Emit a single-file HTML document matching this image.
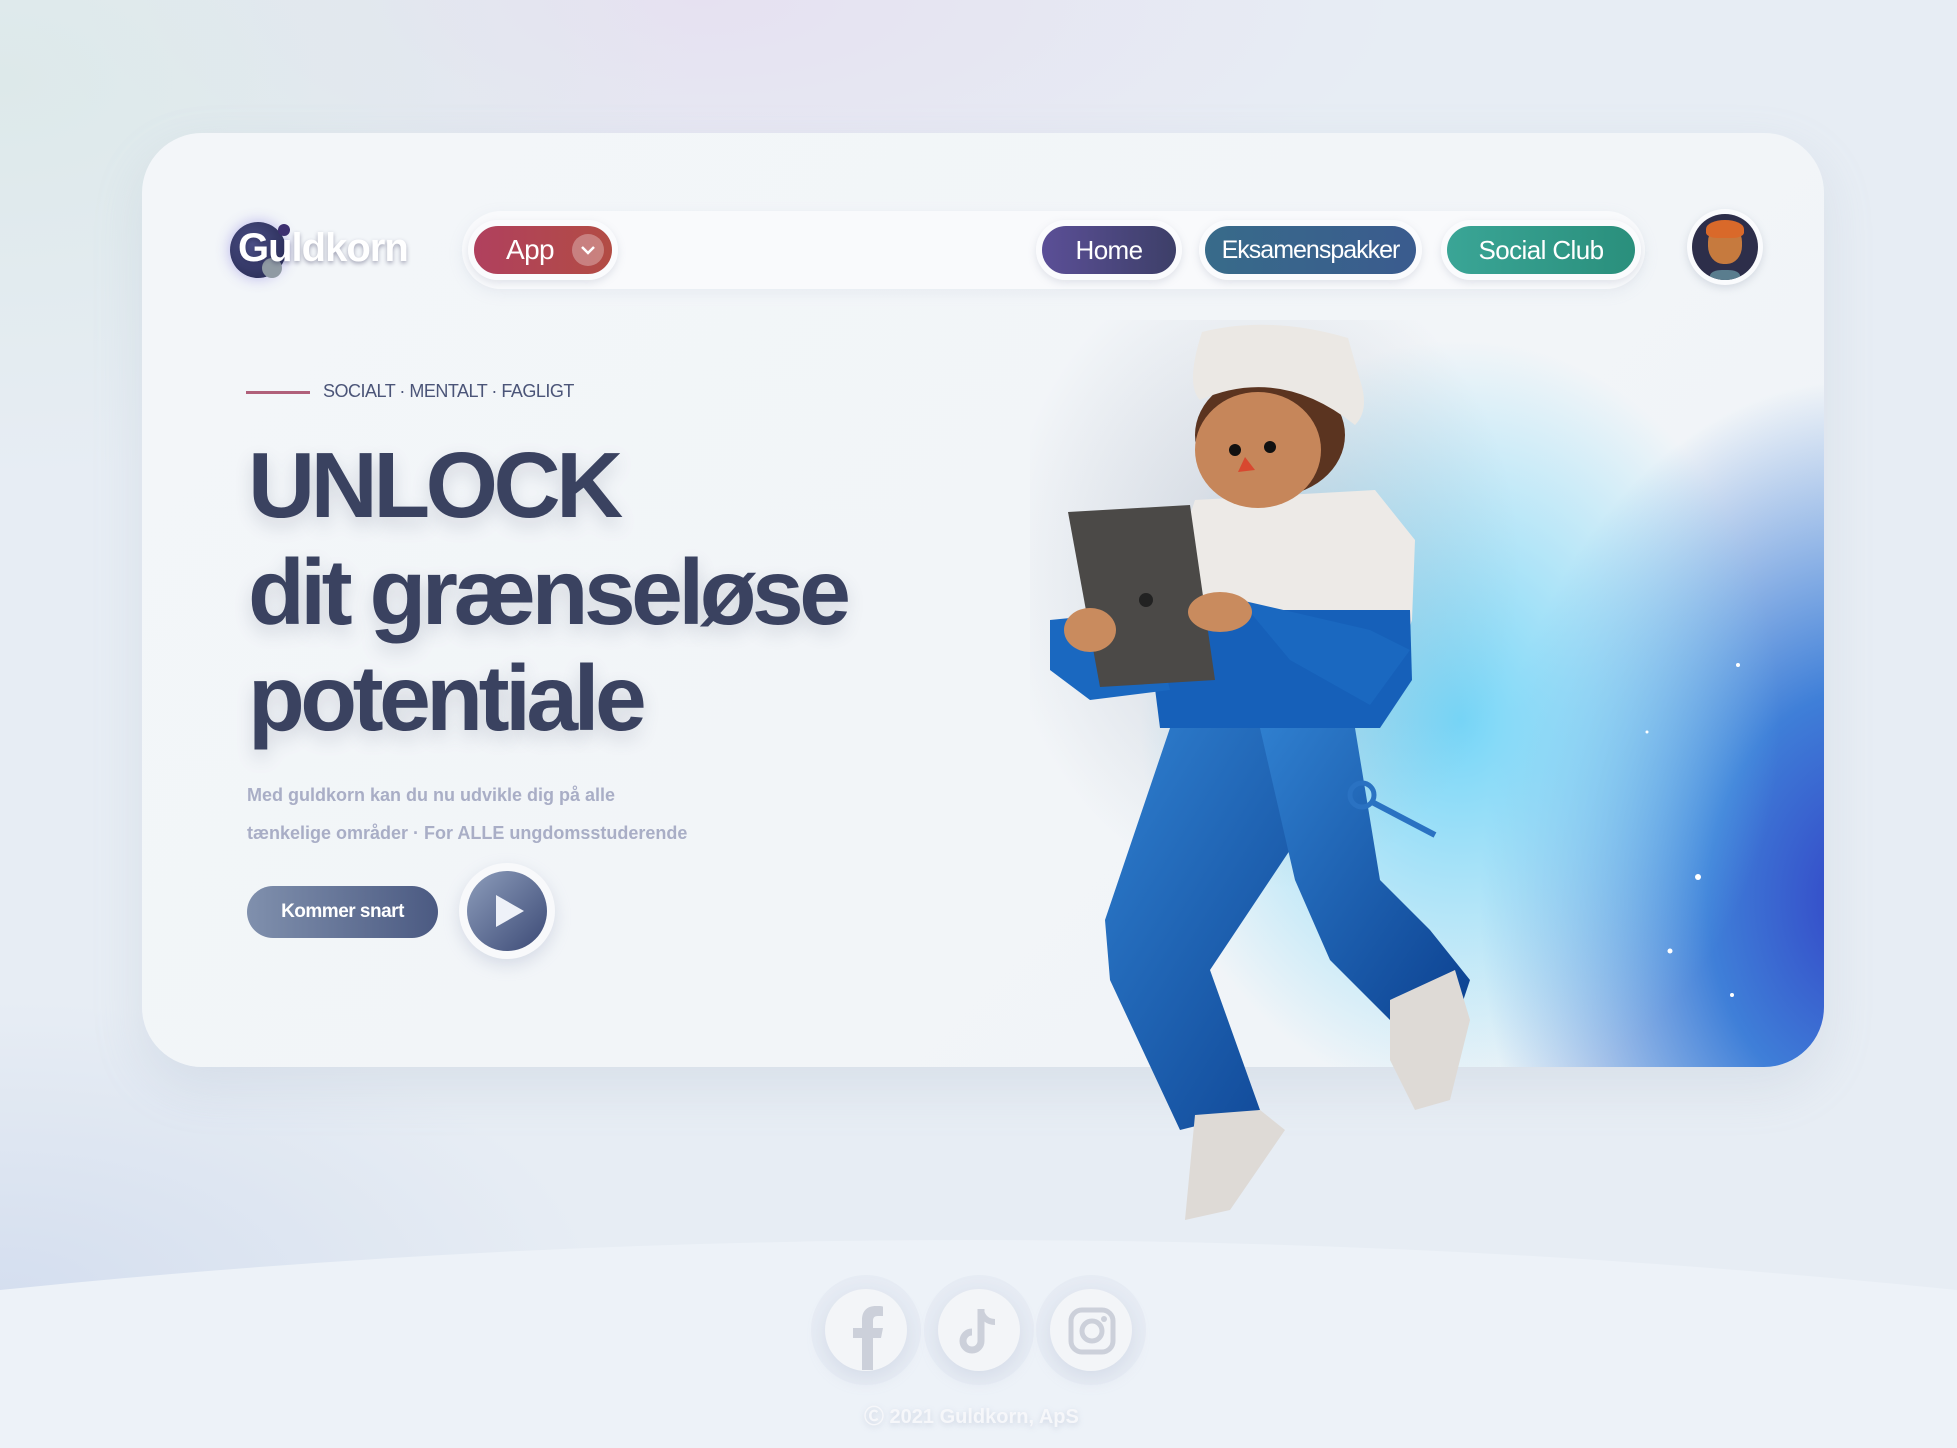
<!DOCTYPE html>
<html><head><meta charset="utf-8">
<style>
*{margin:0;padding:0;box-sizing:border-box}
html,body{width:1957px;height:1448px;overflow:hidden}
body{position:relative;font-family:"Liberation Sans",sans-serif;
background:radial-gradient(ellipse 700px 400px at 0px 80px,#dde9ea 0%,rgba(221,233,234,0) 100%),
radial-gradient(ellipse 700px 260px at 700px 0px,#e6e1f1 0%,rgba(230,225,241,0) 100%),
radial-gradient(ellipse 600px 300px at 0px 1300px,#d4deef 0%,rgba(212,222,239,0) 100%),
#e7edf4}
.wrap{position:absolute;left:0;top:0;width:1957px;height:1448px;overflow:hidden}
.abs{position:absolute}
.card{left:142px;top:133px;width:1682px;height:934px;border-radius:60px;
background:linear-gradient(135deg,#f3f6f9 0%,#f2f5f8 60%,#eef3f7 100%);
box-shadow:0 20px 50px rgba(150,165,190,.18);overflow:hidden}
.glow{width:1100px;height:900px;
background:radial-gradient(ellipse 320px 380px at 560px 470px,#76d6f8 0%,rgba(118,214,248,.55) 45%,rgba(118,214,248,0) 100%),
radial-gradient(ellipse 380px 520px at 960px 650px,#3344c6 0%,#3f7fd8 40%,rgba(80,160,230,0) 100%)}
.nav{left:462px;top:211px;width:1183px;height:78px;border-radius:40px;background:rgba(250,251,253,.8);box-shadow:0 4px 14px rgba(170,180,200,.15)}
.pill{position:absolute;top:220px;height:60px;border-radius:30px;border:6px solid #fafbfd;color:#fff;font-size:26px;letter-spacing:-.6px;display:flex;align-items:center;justify-content:center;box-shadow:0 3px 8px rgba(150,160,180,.25);white-space:nowrap}
.h1{left:248px;color:#3a4260;font-weight:bold;font-size:93px;letter-spacing:-4.5px;text-shadow:0 8px 18px rgba(60,70,100,.18);white-space:nowrap}
.p{left:247px;color:#a9aec6;font-weight:bold;font-size:18px;white-space:nowrap}
.soc{width:82px;height:82px;border-radius:50%;background:#f3f5f8;box-shadow:0 0 0 14px rgba(215,222,235,.3),0 6px 18px rgba(160,170,195,.3);top:1289px}
</style></head><body><div class="wrap">
<svg class="abs" style="left:0;top:1230px" width="1957" height="218"><path d="M0 60 Q978 -40 1957 60 L1957 218 L0 218Z" fill="#edf2f8"/></svg>

<div class="abs card"><div class="abs glow" style="left:758px;top:117px"></div>
<svg class="abs" style="left:1158px;top:117px" width="524" height="817">
<g fill="#fff">
<circle cx="438" cy="415" r="2"/><circle cx="347" cy="482" r="1.5"/><circle cx="398" cy="627" r="3"/><circle cx="370" cy="701" r="2.5"/><circle cx="432" cy="745" r="2"/><circle cx="400" cy="845" r="3"/><circle cx="390" cy="858" r="2"/><circle cx="260" cy="863" r="3"/><circle cx="218" cy="925" r="2"/><circle cx="434" cy="885" r="1.5"/>
</g></svg>
</div>

<div class="abs nav"></div>
<div class="abs" style="left:230px;top:222px;width:56px;height:56px;border-radius:50%;background:radial-gradient(circle at 40% 40%,#4b4f86,#23264d);box-shadow:0 0 14px rgba(110,100,220,.45)"></div>
<div class="abs" style="left:278px;top:224px;width:12px;height:12px;border-radius:50%;background:#3c2f70"></div>
<div class="abs" style="left:262px;top:258px;width:20px;height:20px;border-radius:50%;background:#8f9aa3"></div>
<div class="abs" style="left:238px;top:226px;font-size:40px;font-weight:bold;color:#fff;letter-spacing:-1px;text-shadow:0 2px 4px rgba(40,40,80,.4)">Guldkorn</div>

<div class="pill" style="left:468px;width:150px;background:linear-gradient(90deg,#b0405e,#b24c44);justify-content:flex-start;padding-left:32px;font-size:28px">App
<span style="position:absolute;right:8px;top:8px;width:32px;height:32px;border-radius:50%;background:rgba(255,255,255,.3);display:flex;align-items:center;justify-content:center"><svg width="16" height="10"><path d="M2 2l6 6 6-6" stroke="#fff" stroke-width="2.5" fill="none"/></svg></span></div>
<div class="pill" style="left:1036px;width:146px;background:linear-gradient(90deg,#5b4f97,#3d3f68)">Home</div>
<div class="pill" style="left:1199px;width:223px;background:linear-gradient(90deg,#386b8a,#3a5b8e);font-size:25px;letter-spacing:-1px">Eksamenspakker</div>
<div class="pill" style="left:1441px;width:200px;background:linear-gradient(90deg,#3aa596,#2a8f7c)">Social Club</div>
<div class="abs" style="left:1687px;top:209px;width:76px;height:76px;border-radius:50%;background:#fafbfd;box-shadow:0 3px 8px rgba(150,160,180,.3)"></div>
<div class="abs" style="left:1692px;top:214px;width:66px;height:66px;border-radius:50%;background:#2d2e4a;overflow:hidden">
<div class="abs" style="left:16px;top:10px;width:34px;height:40px;border-radius:45%;background:#c67a3e"></div>
<div class="abs" style="left:14px;top:6px;width:38px;height:18px;border-radius:50% 50% 30% 30%;background:#d9692a"></div>
<div class="abs" style="left:18px;top:56px;width:30px;height:14px;border-radius:40%;background:#5a7d8e"></div></div>

<div class="abs" style="left:246px;top:391px;width:64px;height:3px;background:#b0607a"></div>
<div class="abs" style="left:323px;top:381px;font-size:18px;color:#4b5578;letter-spacing:-.5px">SOCIALT · MENTALT · FAGLIGT</div>
<div class="abs h1" style="top:432px">UNLOCK</div>
<div class="abs h1" style="top:539px">dit grænseløse</div>
<div class="abs h1" style="top:645px">potentiale</div>
<div class="abs p" style="top:785px">Med guldkorn kan du nu udvikle dig på alle</div>
<div class="abs p" style="top:823px">tænkelige områder · For ALLE ungdomsstuderende</div>
<div class="abs" style="left:247px;top:886px;width:191px;height:52px;border-radius:26px;background:linear-gradient(90deg,#8090ad,#4b5a82);color:#fff;font-weight:bold;font-size:19px;display:flex;align-items:center;justify-content:center;letter-spacing:-.5px">Kommer snart</div>
<div class="abs" style="left:459px;top:863px;width:96px;height:96px;border-radius:50%;background:#f8f9fb;box-shadow:0 6px 16px rgba(150,160,190,.3)"></div>
<div class="abs" style="left:467px;top:871px;width:80px;height:80px;border-radius:50%;background:linear-gradient(135deg,#8d9dbb,#3c4a76)"></div>
<svg class="abs" style="left:494px;top:893px" width="32" height="36"><path d="M2 2L30 18 2 34z" fill="#eef1f8"/></svg>

<svg class="abs" style="left:1030px;top:320px" width="560" height="920">
<defs>
<linearGradient id="bl" x1="0" y1="0" x2="1" y2="1"><stop offset="0" stop-color="#2f7fcf"/><stop offset="1" stop-color="#0b3f8e"/></linearGradient>
<radialGradient id="sh" cx=".5" cy=".5" r=".5"><stop offset="0" stop-color="rgba(120,135,160,.3)"/><stop offset="1" stop-color="rgba(120,135,160,0)"/></radialGradient>
</defs>
<ellipse cx="230" cy="250" rx="260" ry="320" fill="url(#sh)"/>
<path d="M140 408 L325 408 L280 500 L180 650 L230 790 L150 810 L80 660 L75 600 Z" fill="url(#bl)"/>
<path d="M230 408 L325 408 L350 560 L400 610 L440 660 L420 720 L360 700 L300 640 L265 560 Z" fill="url(#bl)"/>
<path d="M165 795 L230 790 L255 810 L200 890 L155 900 Z" fill="#dedad6"/>
<path d="M360 680 L425 650 L440 700 L420 780 L385 790 L360 740 Z" fill="#dedad6"/>
<path d="M165 180 L345 170 L385 220 L382 300 L350 400 L140 405 L125 300 Z" fill="#edeae7"/>
<path d="M115 290 L380 290 L382 360 L350 408 L130 408 Z" fill="#1660b9"/>
<path d="M20 300 L120 290 L140 370 L60 380 L20 350 Z" fill="#1a68c0"/>
<path d="M210 280 L340 310 L380 330 L340 385 L260 340 Z" fill="#1a68c0"/>
<path d="M38 192 L160 185 L185 360 L70 367 Z" fill="#4b4947"/>
<circle cx="116" cy="280" r="7" fill="#222"/>
<ellipse cx="60" cy="310" rx="26" ry="22" fill="#c98b5e"/>
<ellipse cx="190" cy="292" rx="32" ry="20" fill="#c98b5e"/>
<ellipse cx="240" cy="115" rx="75" ry="62" fill="#5b3420"/>
<ellipse cx="228" cy="130" rx="63" ry="58" fill="#c6865a"/>
<circle cx="205" cy="130" r="6" fill="#111"/><circle cx="240" cy="127" r="6" fill="#111"/>
<path d="M215 137 L225 150 L208 152Z" fill="#d8482f"/>
<path d="M172 12 Q240 -5 318 18 L330 60 Q340 90 325 105 Q250 45 170 80 Q155 65 172 12Z" fill="#ebe8e4"/>
<circle cx="332" cy="475" r="12" fill="none" stroke="#2a72c2" stroke-width="5"/>
<path d="M342 482 L405 515" stroke="#2a72c2" stroke-width="6"/>
</svg>

<div class="abs soc" style="left:825px"></div>
<div class="abs soc" style="left:938px"></div>
<div class="abs soc" style="left:1050px"></div>
<svg class="abs" style="left:845px;top:1300px" width="50" height="70"><path d="M17 70V38H8V28h9v-8c0-9 5-14 14-14 4 0 7 0 7 1v9h-5c-4 0-5 2-5 5v7h10l-2 10h-8v32z" fill="#ccd0da"/></svg>
<svg class="abs" style="left:957px;top:1307px" width="46" height="50"><path d="M24 2v32a9 9 0 1 1-9-9" stroke="#ccd0da" stroke-width="7" fill="none"/><path d="M24 4c2 7 7 11 14 11" stroke="#ccd0da" stroke-width="6" fill="none"/></svg>
<svg class="abs" style="left:1068px;top:1307px" width="48" height="48"><rect x="3" y="3" width="42" height="42" rx="11" stroke="#ccd0da" stroke-width="5" fill="none"/><circle cx="24" cy="24" r="10" stroke="#ccd0da" stroke-width="5" fill="none"/><circle cx="36" cy="12" r="3" fill="#ccd0da"/></svg>
<div class="abs" style="left:864px;top:1400px;font-size:20px;font-weight:bold;color:#f6f7fa;text-shadow:0 2px 6px rgba(150,160,190,.35)">Ⓒ 2021 Guldkorn, ApS</div>
</div></body></html>
